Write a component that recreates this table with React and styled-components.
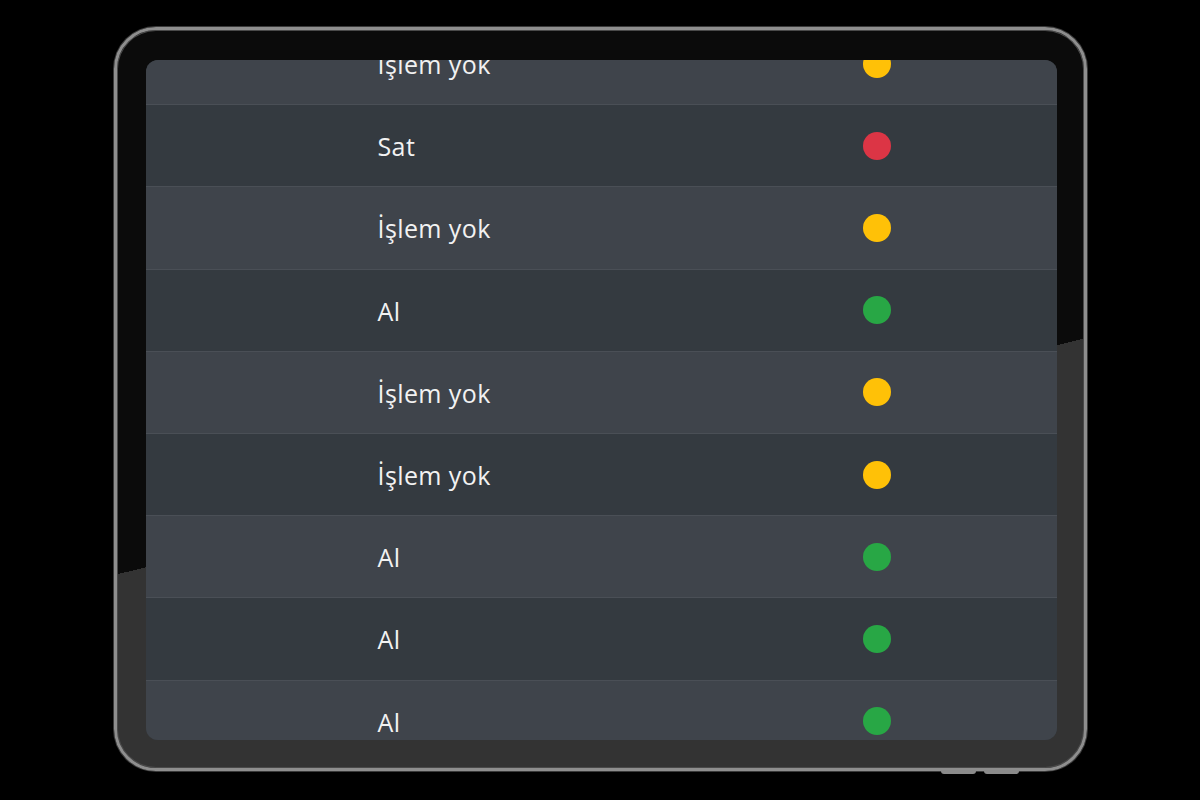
import React from 'react'
import styled, { createGlobalStyle } from 'styled-components'

const GlobalStyle = createGlobalStyle`
  html, body {
    margin: 0;
    padding: 0;
    background: #000;
    height: 100%;
  }
  #root {
    height: 100%;
  }
`

const Page = styled.div`
  width: 1200px;
  height: 800px;
  display: flex;
  align-items: center;
  justify-content: center;
  background: #000;
`

const Tablet = styled.div`
  position: relative;
  width: 973px;
  height: 744px;
  box-sizing: border-box;
  margin-top: -2px;
  padding: 30px 27px 28px 29px;
  border: 3px solid #8e8e8e;
  border-radius: 42px;
  box-shadow: 0 0 0 1px #3a3a3a, inset 0 0 0 1px #4a4a4a;
  background: linear-gradient(166.3deg, #0b0b0b 55.9%, #333333 55.9%);
`

const SideButton = styled.span`
  position: absolute;
  bottom: -6px;
  left: ${(p) => p.$left}px;
  width: 35px;
  height: 4px;
  border-radius: 0 0 3px 3px;
  background: #8a8a8a;
`

const Screen = styled.div`
  width: 100%;
  height: 100%;
  border-radius: 12px;
  overflow: hidden;
  background: #343a40;
`

const List = styled.div`
  margin-top: -38px;
  display: flex;
  flex-direction: column;
`

const Row = styled.div`
  display: grid;
  grid-template-columns: 232px 485px 28px 1fr;
  align-items: center;
  height: 82.2px;
  box-sizing: border-box;
  border-top: 1px solid #4a4f56;
  background: ${(p) => (p.$striped ? '#3f444b' : '#343a40')};
  color: #f2f2f2;
  font-family: 'Open Sans', 'Noto Sans', sans-serif;
  font-size: 25px;
  letter-spacing: 0.4px;
`

const Label = styled.span`
  grid-column: 2;
  line-height: 1;
  padding-top: 2px;
`

const Dot = styled.span`
  grid-column: 3;
  width: 28px;
  height: 28px;
  border-radius: 50%;
  background: ${(p) => p.$color};
`

const COLORS = {
  al: '#28a745',
  sat: '#dc3545',
  yok: '#ffc107',
}

const rows = [
  { label: 'İşlem yok', kind: 'yok' },
  { label: 'Sat', kind: 'sat' },
  { label: 'İşlem yok', kind: 'yok' },
  { label: 'Al', kind: 'al' },
  { label: 'İşlem yok', kind: 'yok' },
  { label: 'İşlem yok', kind: 'yok' },
  { label: 'Al', kind: 'al' },
  { label: 'Al', kind: 'al' },
  { label: 'Al', kind: 'al' },
]

const App = () => {
  return (
    <Page>
      <GlobalStyle />
      <Tablet>
        <Screen>
          <List>
            {rows.map((r, i) => (
              <Row key={i} $striped={i % 2 === 0}>
                <Label>{r.label}</Label>
                <Dot $color={COLORS[r.kind]} />
              </Row>
            ))}
          </List>
        </Screen>
        <SideButton $left={824} />
        <SideButton $left={867} />
      </Tablet>
    </Page>
  )
}

export default App
